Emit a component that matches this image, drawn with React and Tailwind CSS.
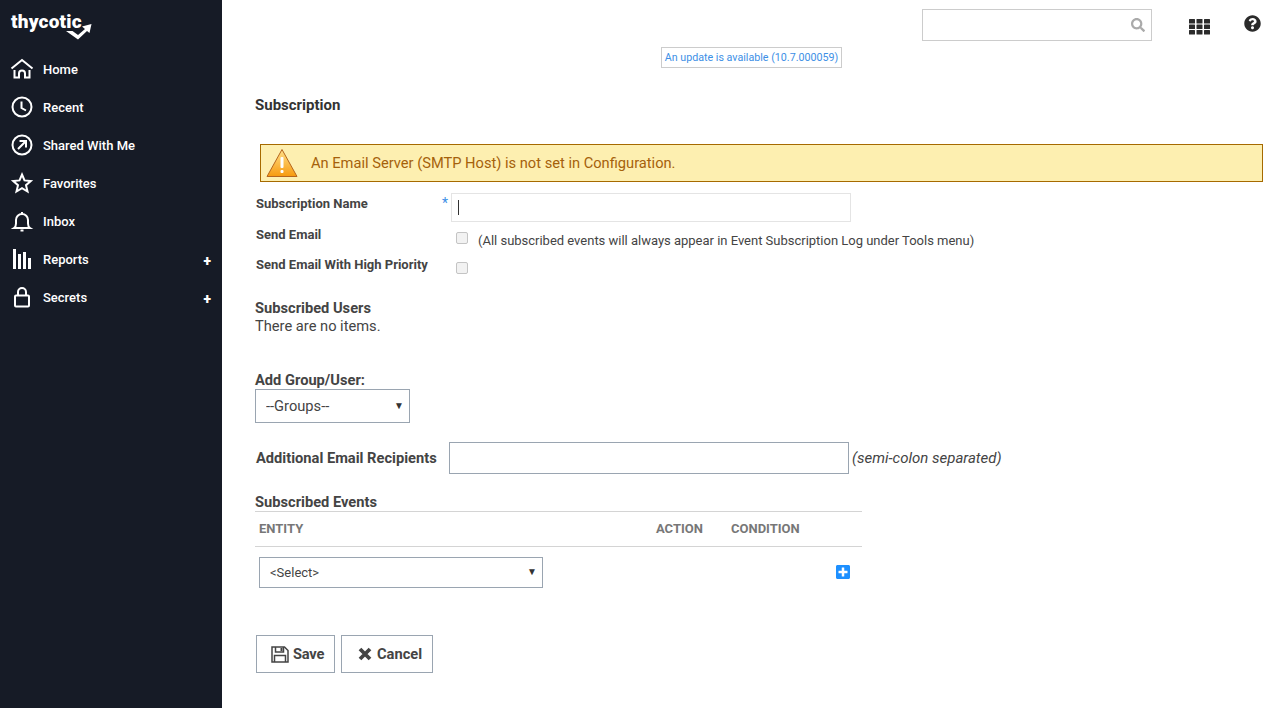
import React from "react";
import { FaSearch, FaQuestionCircle, FaPlusSquare } from "react-icons/fa";

const ICON = "w-[24px] h-[24px] shrink-0 fill-none stroke-white stroke-2";

const HomeIcon = () => (
  <svg viewBox="0 0 24 24" className={ICON}>
    <path d="M1.500 11.500 12 3l10.500 8.500" />
    <path d="M4.500 13v7.500h4.500v-4a3 3 0 0 1 6 0v4h4.500V13" />
  </svg>
);
const ClockIcon = () => (
  <svg viewBox="0 0 24 24" className={ICON}>
    <circle cx="12" cy="12" r="9.500" />
    <path d="M11.500 6.500V13l4.500 2.500" />
  </svg>
);
const SharedIcon = () => (
  <svg viewBox="0 0 24 24" className={ICON}>
    <circle cx="12" cy="12" r="9.500" />
    <path d="M8 16 15.500 8.500M9.500 8h6.500v6.500" />
  </svg>
);
const StarIcon = () => (
  <svg viewBox="0 0 24 24" className={ICON}>
    <path d="m12 3.500 2.500 5.900 6.300.6-4.800 4.200 1.500 6.300L12 17.200l-5.500 3.300 1.500-6.300L3.200 10l6.300-.6z" />
  </svg>
);
const BellIcon = () => (
  <svg viewBox="0 0 24 24" className={ICON}>
    <path d="M4 19h16c-1.500-1-2-2.500-2-4.500v-3.500a6 6 0 0 0-12 0v3.500c0 2-.5 3.500-2 4.500z" />
    <path d="M12 3v2M10.500 21.500h3" />
  </svg>
);
const ReportsIcon = () => (
  <svg viewBox="0 0 24 24" className="w-[24px] h-[24px] shrink-0 fill-white">
    <rect x="3" y="2" width="3" height="20" />
    <rect x="8" y="7" width="3" height="15" />
    <rect x="13" y="5" width="3" height="17" />
    <rect x="18" y="11" width="3" height="11" />
  </svg>
);
const LockIcon = () => (
  <svg viewBox="0 0 24 24" className={ICON}>
    <rect x="5" y="10.500" width="14" height="11" rx="1" />
    <path d="M8 10.500V7a4 4 0 0 1 8 0v3.500" />
  </svg>
);
const GridIcon = () => (
  <svg viewBox="0 0 21 16" className="w-[21px] h-[16px] shrink-0 fill-[#2b2b2b]">
    {[0, 5.500, 11].map((y) =>
      [0, 7.500, 15].map((x) => <rect key={`${x}-${y}`} x={x} y={y} width="6" height="4.500" rx="0.500" />)
    )}
  </svg>
);
const SaveIcon = () => (
  <svg viewBox="0 0 18 17" className="w-[18px] h-[17px] shrink-0 fill-none stroke-[#444] stroke-[1.500]">
    <path d="M1 1h12.500L17 4.500V16H1z" />
    <path d="M4.500 1v5h8V1" />
    <path d="M3.500 16v-6.500h11V16" />
    <rect x="9.500" y="2" width="2" height="3" className="fill-[#444] stroke-0" />
  </svg>
);
const CloseIcon = () => (
  <svg viewBox="0 0 14 14" className="w-[14px] h-[14px] shrink-0 fill-none stroke-[#444] stroke-[3.800]">
    <path d="M2 2 12 12M12 2 2 12" />
  </svg>
);

const NAV = [
  { label: "Home", icon: HomeIcon },
  { label: "Recent", icon: ClockIcon },
  { label: "Shared With Me", icon: SharedIcon },
  { label: "Favorites", icon: StarIcon },
  { label: "Inbox", icon: BellIcon },
  { label: "Reports", icon: ReportsIcon, more: true },
  { label: "Secrets", icon: LockIcon, more: true },
];

function Sidebar() {
  return (
    <aside className="w-[222px] shrink-0 bg-[#161b26] text-white">
      {/* Logo */}
      <div className="h-[50px] pl-[11px] pt-[9px] relative">
        <span className="text-[19px] leading-[26px] font-black tracking-[0.2px] text-white">thycotic</span>
        <svg viewBox="0 0 26 16" className="absolute left-[66px] top-[24px] w-[26px] h-[16px] fill-white">
          <path d="M0 7h6.500L12 11l7-6-3-2.500L25.500 0l-2 9L21 7l-9 8.500z" />
        </svg>
      </div>
      <nav>
        {NAV.map((item) => (
          <div key={item.label} className="h-[38px] pl-[10px] pr-[11px] flex items-center">
            <item.icon />
            <span className="ml-[9px] mt-[1px] text-[13px] font-medium text-white">{item.label}</span>
            {item.more && <span className="ml-auto mt-[4px] text-[14px] leading-none font-black">+</span>}
          </div>
        ))}
      </nav>
    </aside>
  );
}

function Caret({ className }) {
  return <span className={`absolute text-[10px] leading-none text-[#333] pointer-events-none ${className}`}>▼</span>;
}

export default function App() {
  return (
    <div className="flex min-h-[708px] font-['Roboto',sans-serif] text-[#444] bg-white">
      <Sidebar />
      <main className="flex-1 min-w-0">
        {/* Top bar */}
        <div className="flex items-start pt-[9px]">
          <div className="ml-[700px] w-[230px] h-[32px] border border-[#ccc] flex items-center justify-end pr-[6px]">
            <FaSearch className="text-[#aaa] text-[14px]" />
          </div>
          <div className="ml-[37px] mt-[10px]">
            <GridIcon />
          </div>
          <FaQuestionCircle className="ml-[34px] mt-[6px] text-[#2b2b2b] text-[17px]" />
        </div>
        <div className="ml-[439px] mt-[6px] w-[181px] h-[21px] border border-[#ccc] text-[10.700px] leading-[19px] text-[#3d8fe6] text-center">
          An update is available (10.7.000059)
        </div>

        <h1 className="ml-[33px] mt-[27px] text-[15px] leading-[20px] font-bold text-[#333]">Subscription</h1>

        {/* Warning */}
        <div className="ml-[38px] mr-[11px] mt-[29px] h-[38px] bg-[#fdefb0] border border-[#a66a00] flex items-center">
          <svg viewBox="0 0 32 30" className="ml-[5px] w-[32px] h-[30px] shrink-0">
            <defs>
              <linearGradient id="warn" x1="0" y1="0" x2="0" y2="1">
                <stop offset="0" stopColor="#ffe08a" />
                <stop offset="1" stopColor="#f79a0e" />
              </linearGradient>
            </defs>
            <path d="M16 1.500 31 28.500H1z" fill="url(#warn)" stroke="#b5651d" strokeWidth="1" strokeLinejoin="round" />
            <rect x="14.500" y="9" width="3" height="11" rx="1" fill="#fff" />
            <rect x="14.500" y="22" width="3" height="3" rx="1" fill="#fff" />
          </svg>
          <span className="ml-[13px] mt-[1px] text-[14.660px] text-[#a5610b]">An Email Server (SMTP Host) is not set in Configuration.</span>
        </div>

        {/* Form rows */}
        <div className="mt-[11px] ml-[34px] flex h-[29px]">
          <label className="w-[186px] mt-[1px] text-[13px] leading-[20px] font-bold">Subscription Name</label>
          <span className="w-[9px] text-[14px] leading-[20px] text-[#3d8fe6]">*</span>
          <div className="w-[400px] h-[29px] border border-[#e4e4e4] flex items-center pl-[6px]">
            <span className="w-[1px] h-[15px] bg-[#333]" />
          </div>
        </div>
        <div className="mt-[3px] ml-[34px] flex h-[30px]">
          <label className="w-[200px] text-[13px] leading-[20px] font-bold">Send Email</label>
          <input type="checkbox" className="mt-[7px] w-[12px] h-[12px] appearance-none rounded-[2px] border border-[#c4c4c4] bg-[#f2f2f2]" />
          <span className="ml-[10px] mt-[6px] text-[13px] leading-[20px] tracking-[-0.01px]">(All subscribed events will always appear in Event Subscription Log under Tools menu)</span>
        </div>
        <div className="ml-[34px] flex h-[30px]">
          <label className="w-[200px] text-[13px] leading-[20px] font-bold">Send Email With High Priority</label>
          <input type="checkbox" className="mt-[7px] w-[12px] h-[12px] appearance-none rounded-[2px] border border-[#c4c4c4] bg-[#f2f2f2]" />
        </div>

        {/* Subscribed users */}
        <div className="ml-[33px] mt-[14px]">
          <h2 className="text-[14.660px] leading-[18px] font-bold">Subscribed Users</h2>
          <p className="text-[14.660px] leading-[18px]">There are no items.</p>
        </div>

        <div className="ml-[33px] mt-[36px]">
          <h2 className="text-[14.660px] leading-[18px] font-bold">Add Group/User:</h2>
          <div className="relative w-[155px]">
            <select className="block w-[155px] h-[34px] appearance-none border border-[#9aa5b1] pl-[10px] pt-[1px] text-[14.660px] text-[#444] bg-white outline-none">
              <option>--Groups--</option>
            </select>
            <Caret className="right-[6px] top-[12px]" />
          </div>
        </div>

        <div className="ml-[34px] mt-[19px] flex items-center">
          <label className="w-[193px] mt-[1px] text-[14.660px] font-bold">Additional Email Recipients</label>
          <input type="text" className="w-[400px] h-[32px] border border-[#9aa5b1] outline-none" />
          <span className="ml-[3px] mt-[1px] text-[15px] italic">(semi-colon separated)</span>
        </div>

        {/* Subscribed events */}
        <div className="ml-[33px] mt-[19px] w-[607px]">
          <h2 className="text-[14.660px] leading-[18px] font-bold">Subscribed Events</h2>
          <div className="border-t border-b border-[#d4d4d4] h-[36px] flex items-center text-[13px] font-bold text-[#777]">
            <span className="ml-[4px] w-[397px]">ENTITY</span>
            <span className="w-[75px]">ACTION</span>
            <span>CONDITION</span>
          </div>
          <div className="mt-[10px] flex items-center">
            <div className="relative ml-[4px] w-[284px]">
              <select className="block w-[284px] h-[31px] appearance-none border border-[#9aa5b1] pl-[10px] pt-[1px] text-[13px] text-[#444] bg-white outline-none">
                <option>&lt;Select&gt;</option>
              </select>
              <Caret className="right-[6px] top-[10px]" />
            </div>
            <FaPlusSquare className="ml-[292px] -mt-[1px] text-[#1e90ff] text-[16px]" />
          </div>
        </div>

        {/* Buttons */}
        <div className="ml-[34px] mt-[47px] flex gap-[6px]">
          <button className="w-[79px] h-[38px] border border-[#9aa5b1] flex items-center pl-[14px] gap-[4px] text-[14.660px] font-bold text-[#444]">
            <SaveIcon />
            <span className="mt-[1px] tracking-[-0.2px]">Save</span>
          </button>
          <button className="w-[92px] h-[38px] border border-[#9aa5b1] flex items-center pl-[16px] gap-[5px] text-[14.660px] font-bold text-[#444]">
            <CloseIcon />
            <span className="mt-[1px]">Cancel</span>
          </button>
        </div>
      </main>
    </div>
  );
}
